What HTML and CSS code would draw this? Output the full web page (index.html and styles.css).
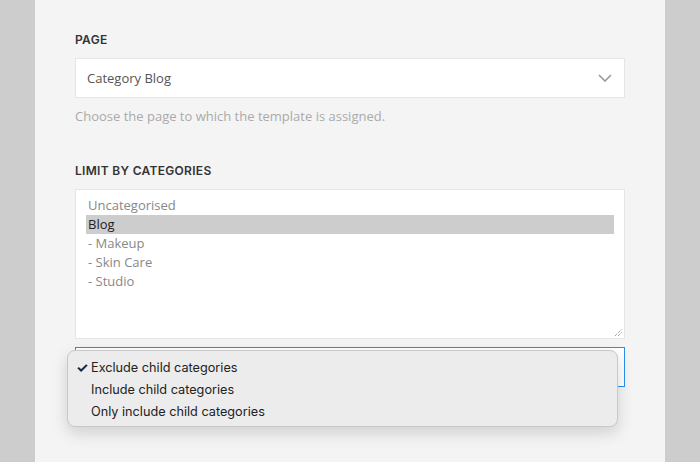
FILE: index.html
```html
<!DOCTYPE html>
<html lang="en">
<head>
    <meta charset="UTF-8">
    <meta name="viewport" content="width=device-width, initial-scale=1.0">
    <title>Template Settings</title>
    <link rel="stylesheet" href="styles.css">
</head>
<body>

    <!-- Settings panel -->
    <div class="panel">

        <div class="field">
            <label class="field-label">Page</label>
            <div class="select">
                <span>Category Blog</span>
                <svg class="chevron" width="14" height="8" viewBox="0 0 14 8">
                    <path d="M1 1 L7 7 L13 1" fill="none" stroke="#999" stroke-width="1.6"/>
                </svg>
            </div>
            <p class="help">Choose the page to which the template is assigned.</p>
        </div>

        <div class="field">
            <label class="field-label">Limit by categories</label>
            <div class="multi">
                <ul class="options">
                    <li>Uncategorised</li>
                    <li class="selected">Blog</li>
                    <li>- Makeup</li>
                    <li>- Skin Care</li>
                    <li>- Studio</li>
                </ul>
                <svg class="resize" width="9" height="9" viewBox="0 0 9 9">
                    <path d="M1 8 L8 1 M4 8 L8 4" stroke="#777" stroke-width="1" stroke-dasharray="1 1"/>
                </svg>
            </div>

            <div class="select-wrap">
                <div class="select focused"></div>
                <!-- open dropdown menu -->
                <ul class="menu">
                    <li><span class="check">✓</span>Exclude child categories</li>
                    <li><span class="check"></span>Include child categories</li>
                    <li><span class="check"></span>Only include child categories</li>
                </ul>
            </div>
        </div>

    </div>

</body>
</html>
```

FILE: styles.css
```css
body {
    margin: 0;
    padding: 0;
    background-color: #cdcdcd;
    font-family: 'Open Sans', sans-serif;
    color: #555;
}

/* Panel */
.panel {
    width: 630px;
    height: 462px;
    margin: 0 35px;
    padding: 32px 40px 0;
    box-sizing: border-box;
    background: #f4f4f4;
}

.field {
    margin-bottom: 37px;
}

.field-label {
    display: block;
    font-family: 'Inter', sans-serif;
    font-size: 12px;
    font-weight: 600;
    letter-spacing: 0.3px;
    text-transform: uppercase;
    color: #333;
    line-height: 16px;
    margin-bottom: 10px;
}

/* Select box */
.select {
    height: 40px;
    box-sizing: border-box;
    background: #fff;
    border: 1px solid #e5e5e5;
    display: flex;
    align-items: center;
    justify-content: space-between;
    padding: 0 12px 0 11px;
    font-size: 13px;
    color: #555;
}
.select.focused {
    border-color: #2b8cf0;
}

.help {
    margin: 9px 0 0;
    font-size: 13px;
    line-height: 19px;
    color: #aaa;
}

/* Multiple select */
.multi {
    position: relative;
    height: 150px;
    box-sizing: border-box;
    background: #fff;
    border: 1px solid #e5e5e5;
    padding: 6px 10px 0 10px;
}
.options {
    list-style: none;
    margin: 0;
    padding: 0;
    font-size: 13px;
    line-height: 19px;
    color: #888;
}
.options li {
    padding: 0 2px;
}
.options .selected {
    background: #cdcdcd;
    color: #222;
}
.resize {
    position: absolute;
    right: 1px;
    bottom: 1px;
}

.select-wrap {
    position: relative;
    margin-top: 8px;
}

/* Open dropdown */
.menu {
    position: absolute;
    top: 3px;
    left: -8px;
    width: 551px;
    height: 77px;
    box-sizing: border-box;
    margin: 0;
    padding: 5px 0 0;
    list-style: none;
    background: #ececec;
    border: 1px solid #c8c8c8;
    border-radius: 8px;
    box-shadow: 0 6px 16px rgba(0, 0, 0, 0.15);
    font-family: 'Inter', sans-serif;
    font-size: 12.7px;
    color: #222;
}
.menu li {
    display: flex;
    align-items: center;
    height: 22px;
    padding-left: 8px;
}
.check {
    display: inline-block;
    width: 15px;
    font-size: 14px;
    font-weight: 700;
}
```
